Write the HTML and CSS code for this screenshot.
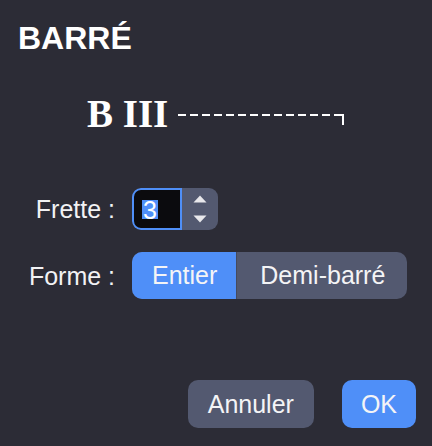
FILE: index.html
```html
<!DOCTYPE html>
<html lang="fr">
<head>
<meta charset="utf-8">
<title>Barré</title>
<link rel="stylesheet" href="styles.css">
</head>
<body>
<div class="dialog">
  <h1 class="title">BARRÉ</h1>
  <div class="diagram">
    <span class="chord">B III</span>
    <svg class="barre-line" width="168" height="12" viewBox="0 0 168 12">
      <line x1="0" y1="1" x2="166" y2="1" stroke="#ffffff" stroke-width="2" stroke-dasharray="8 4"/>
      <line x1="165" y1="0" x2="165" y2="11" stroke="#ffffff" stroke-width="2"/>
    </svg>
  </div>
  <div class="form">
    <label class="label">Frette :</label>
    <div class="spinner">
      <div class="spin-input"><span class="sel">3</span></div>
      <div class="spin-buttons">
        <svg width="14" height="8" viewBox="0 0 14 8"><path d="M7 0.5 L13.5 7.5 L0.5 7.5 Z" fill="#e8e8ec"/></svg>
        <svg width="14" height="8" viewBox="0 0 14 8"><path d="M0.5 0.5 L13.5 0.5 L7 7.5 Z" fill="#e8e8ec"/></svg>
      </div>
    </div>
    <label class="label">Forme :</label>
    <div class="segmented">
      <span class="seg seg-on">Entier</span>
      <span class="seg seg-off">Demi-barré</span>
    </div>
  </div>
  <div class="actions">
    <button class="btn btn-cancel">Annuler</button>
    <button class="btn btn-ok">OK</button>
  </div>
</div>
</body>
</html>
```
FILE: styles.css
```css
html, body {
  margin: 0;
  padding: 0;
  background: #2c2c36;
}
body {
  font-family: "Liberation Sans", Arial, sans-serif;
  color: #f4f4f6;
}
.dialog {
  width: 432px;
  height: 446px;
  display: flex;
  flex-direction: column;
  box-sizing: border-box;
}
.title {
  margin: 22px 0 0 0;
  padding-left: 18px;
  font-size: 32px;
  line-height: 32px;
  font-weight: bold;
  color: #ffffff;
}
.diagram {
  margin-top: 40px;
  padding-left: 87px;
  display: flex;
  align-items: flex-start;
  height: 40px;
}
.chord {
  font-family: "Liberation Serif", "Times New Roman", serif;
  font-weight: bold;
  font-size: 39px;
  line-height: 40px;
  color: #ffffff;
}
.barre-line {
  margin-left: 10px;
  margin-top: 20px;
  display: block;
}
.form {
  margin-top: 54px;
  display: grid;
  grid-template-columns: 115px auto;
  column-gap: 17px;
  row-gap: 22px;
  align-items: center;
  justify-items: start;
}
.label {
  justify-self: end;
  font-size: 25px;
  line-height: 30px;
  color: #f2f2f4;
}
.spinner {
  display: flex;
  height: 42px;
  border-radius: 9px;
  background: #535970;
  overflow: hidden;
}
.spin-input {
  width: 50px;
  box-sizing: border-box;
  border: 2px solid #4f8ff8;
  border-radius: 9px 0 0 9px;
  background: #0b0b0e;
  display: flex;
  align-items: center;
  padding-left: 8px;
}
.sel {
  background: #4f8ff8;
  color: #ffffff;
  font-size: 25px;
  line-height: 20px;
  height: 19px;
  padding: 0 1px;
}
.spin-buttons {
  width: 36px;
  display: flex;
  flex-direction: column;
  align-items: center;
  justify-content: center;
  gap: 12px;
}
.spin-buttons svg {
  display: block;
}
.segmented {
  display: flex;
  height: 47px;
  border-radius: 10px;
  background: #535970;
  overflow: hidden;
}
.seg {
  display: flex;
  align-items: center;
  font-size: 25px;
  color: #f4f4f6;
}
.seg-on {
  background: #4f8ff8;
  padding: 0 19px 0 20px;
}
.seg-off {
  padding: 0 22px 0 23px;
  border-left: 1px solid #454a5e;
}
.actions {
  margin-top: auto;
  padding: 0 16px 18px 0;
  display: flex;
  justify-content: flex-end;
  gap: 28px;
}
.btn {
  height: 48px;
  border: none;
  border-radius: 10px;
  font-family: "Liberation Sans", Arial, sans-serif;
  font-size: 25px;
  color: #f4f4f6;
  padding: 0 20px;
}
.btn-cancel {
  background: #535970;
}
.btn-ok {
  background: #4f8ff8;
  padding: 0 19px;
}
```
